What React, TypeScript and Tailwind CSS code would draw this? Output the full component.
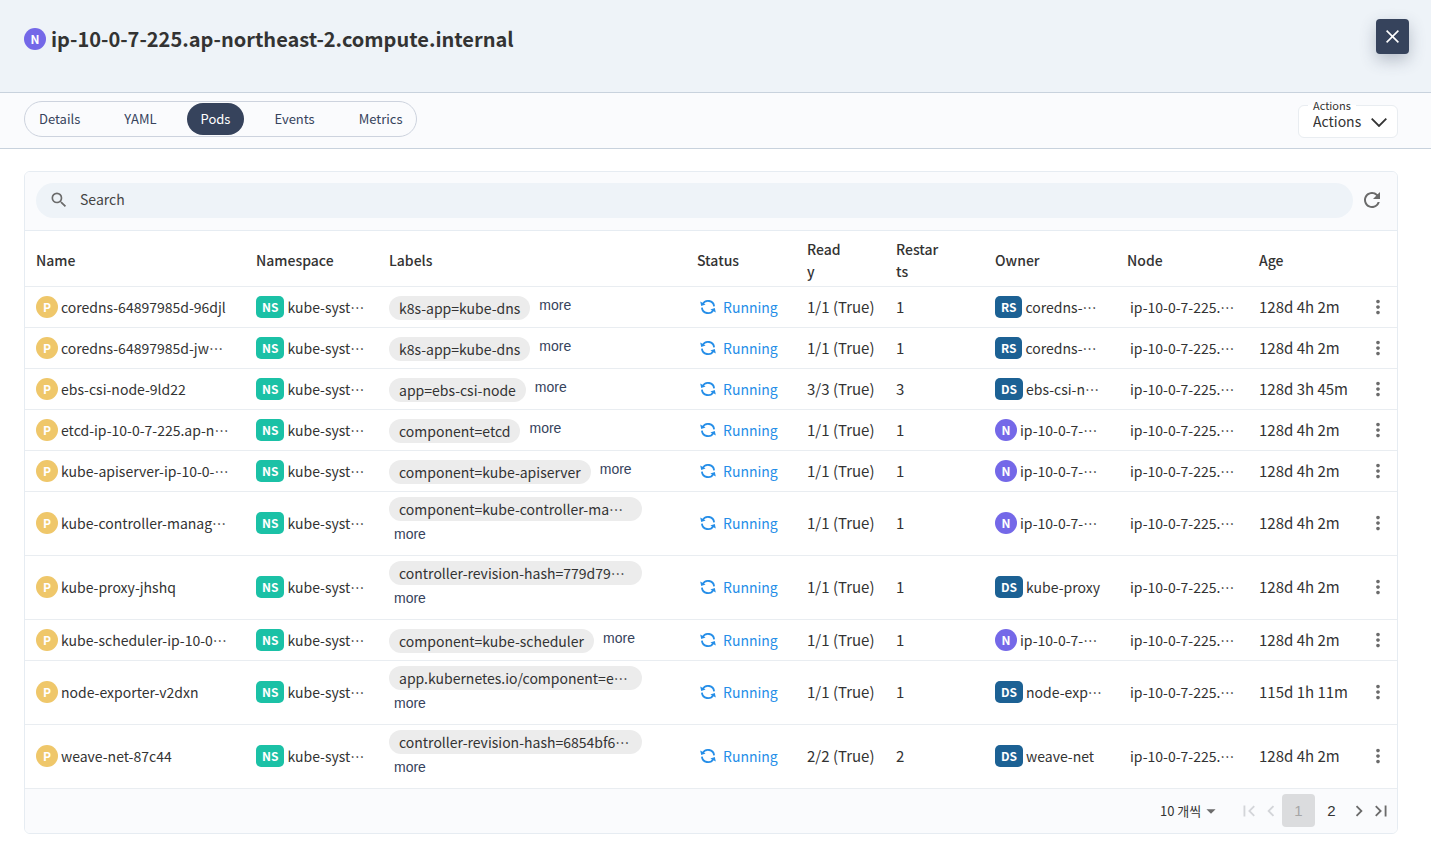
import { useState } from 'react'
import {
  MdArrowDropDown,
  MdChevronLeft,
  MdChevronRight,
  MdFirstPage,
  MdLastPage,
  MdMoreVert,
  MdRefresh,
  MdSearch,
} from 'react-icons/md'

type Kind = 'P' | 'NS' | 'RS' | 'DS' | 'N'

interface Pod {
  name: string
  label: string
  ready: string
  restarts: number
  ownerKind: Kind
  owner: string
  age: string
}

const NODE_NAME = 'ip-10-0-7-225.ap-northeast-2.compute.internal'

const tabs = ['Details', 'YAML', 'Pods', 'Events', 'Metrics']

const pods: Pod[] = [
  { name: 'coredns-64897985d-96djl', label: 'k8s-app=kube-dns', ready: '1/1 (True)', restarts: 1, ownerKind: 'RS', owner: 'coredns-…', age: '128d 4h 2m' },
  { name: 'coredns-64897985d-jw…', label: 'k8s-app=kube-dns', ready: '1/1 (True)', restarts: 1, ownerKind: 'RS', owner: 'coredns-…', age: '128d 4h 2m' },
  { name: 'ebs-csi-node-9ld22', label: 'app=ebs-csi-node', ready: '3/3 (True)', restarts: 3, ownerKind: 'DS', owner: 'ebs-csi-n…', age: '128d 3h 45m' },
  { name: 'etcd-ip-10-0-7-225.ap-n…', label: 'component=etcd', ready: '1/1 (True)', restarts: 1, ownerKind: 'N', owner: 'ip-10-0-7-…', age: '128d 4h 2m' },
  { name: 'kube-apiserver-ip-10-0-…', label: 'component=kube-apiserver', ready: '1/1 (True)', restarts: 1, ownerKind: 'N', owner: 'ip-10-0-7-…', age: '128d 4h 2m' },
  { name: 'kube-controller-manag…', label: 'component=kube-controller-ma…', ready: '1/1 (True)', restarts: 1, ownerKind: 'N', owner: 'ip-10-0-7-…', age: '128d 4h 2m' },
  { name: 'kube-proxy-jhshq', label: 'controller-revision-hash=779d79…', ready: '1/1 (True)', restarts: 1, ownerKind: 'DS', owner: 'kube-proxy', age: '128d 4h 2m' },
  { name: 'kube-scheduler-ip-10-0…', label: 'component=kube-scheduler', ready: '1/1 (True)', restarts: 1, ownerKind: 'N', owner: 'ip-10-0-7-…', age: '128d 4h 2m' },
  { name: 'node-exporter-v2dxn', label: 'app.kubernetes.io/component=e…', ready: '1/1 (True)', restarts: 1, ownerKind: 'DS', owner: 'node-exp…', age: '115d 1h 11m' },
  { name: 'weave-net-87c44', label: 'controller-revision-hash=6854bf6…', ready: '2/2 (True)', restarts: 2, ownerKind: 'DS', owner: 'weave-net', age: '128d 4h 2m' },
]

const columns = [
  { title: 'Name', width: 'w-[220px]' },
  { title: 'Namespace', width: 'w-[133px]' },
  { title: 'Labels', width: 'w-[308px]' },
  { title: 'Status', width: 'w-[110px]' },
  { title: 'Ready', width: 'w-[89px]' },
  { title: 'Restarts', width: 'w-[99px]' },
  { title: 'Owner', width: 'w-[132px]' },
  { title: 'Node', width: 'w-[132px]' },
  { title: 'Age', width: 'w-[108px]' },
]

const badgeStyles: Record<Kind, string> = {
  P: 'w-[22px] rounded-full bg-[#efc76a]',
  N: 'w-[22px] rounded-full bg-[#7468e8]',
  NS: 'px-[6px] rounded-[5px] bg-[#1bc1a6]',
  RS: 'px-[6px] rounded-[5px] bg-[#1c6194]',
  DS: 'px-[6px] rounded-[5px] bg-[#1c6194]',
}

function Clipped({ text }: { text: string }) {
  if (!text.endsWith('…')) return <>{text}</>

  return (
    <>
      {text.slice(0, -1)}
      <span className="inline-block">…</span>
    </>
  )
}

function Badge({ kind }: { kind: Kind }) {
  return (
    <span
      className={`inline-flex h-[22px] shrink-0 items-center justify-center text-xs font-bold leading-none text-white ${badgeStyles[kind]}`}
    >
      {kind}
    </span>
  )
}

function Resource({ kind, name }: { kind: Kind; name: string }) {
  return (
    <div className="flex items-center gap-[3px]">
      <Badge kind={kind} />
      <span className="whitespace-nowrap">
        <Clipped text={name} />
      </span>
    </div>
  )
}

function SyncIcon() {
  return (
    <svg width="16" height="16" viewBox="0 0 16 16" fill="none" stroke="currentColor" strokeWidth="1.8">
      <path d="M2.6 5.2A6.1 6.1 0 0 1 14.1 7.4" />
      <path d="M13.4 10.8A6.1 6.1 0 0 1 1.9 8.6" />
      <path d="M0.2 2.4L1.2 7L5.6 5.6Z" fill="currentColor" stroke="none" />
      <path d="M15.8 13.6L14.8 9L10.4 10.4Z" fill="currentColor" stroke="none" />
    </svg>
  )
}

// Long labels take the full line and push "more" below them
function LabelCell({ label }: { label: string }) {
  const long = label.length > 28

  return (
    <div className={long ? 'flex flex-col items-start gap-[2px] pb-1' : 'flex items-start gap-[9px]'}>
      <span
        className={`h-6 whitespace-nowrap rounded-full bg-[#ececec] px-[10px] leading-6 ${long ? 'w-[253px]' : 'mt-[2px]'}`}
      >
        <Clipped text={label} />
      </span>
      <button
        type="button"
        className={`font-['Liberation_Sans',sans-serif] leading-[22px] text-[#36435c] ${long ? 'ml-[5px]' : ''}`}
      >
        more
      </button>
    </div>
  )
}

function PodRow({ pod }: { pod: Pod }) {
  const long = pod.label.length > 28

  return (
    <tr className={`border-t border-[#e9edf1] ${long ? 'h-[64px]' : 'h-[41px]'}`}>
      <td className="pl-[11px] pr-[8px]">
        <Resource kind="P" name={pod.name} />
      </td>
      <td className="pl-[11px] pr-[8px]">
        <Resource kind="NS" name="kube-syst…" />
      </td>
      <td className="pl-[11px]">
        <LabelCell label={pod.label} />
      </td>
      <td className="pl-[14px]">
        <div className="flex items-center gap-[7px] text-[#258ee8]">
          <SyncIcon />
          <span>Running</span>
        </div>
      </td>
      <td className="whitespace-nowrap pl-[11px] text-[15px]">{pod.ready}</td>
      <td className="pl-[11px] text-[15px]">{pod.restarts}</td>
      <td className="pl-[11px] pr-[8px]">
        <Resource kind={pod.ownerKind} name={pod.owner} />
      </td>
      <td className="whitespace-nowrap pl-[14px] pr-[8px]">
        <Clipped text="ip-10-0-7-225.…" />
      </td>
      <td className="whitespace-nowrap pl-[11px] text-[15px]">{pod.age}</td>
      <td>
        <button type="button" aria-label={`Open menu for ${pod.name}`} className="flex w-full justify-center pl-[2px] text-[#6b6b6b]">
          <MdMoreVert size={22} />
        </button>
      </td>
    </tr>
  )
}

function Pagination() {
  return (
    <div className="flex h-[45px] items-center justify-end border-t border-[#e9edf1] bg-[#fafbfd] pb-px pr-[5px]">
      <div className="relative mr-[18px] flex items-center">
        <select
          aria-label="Rows per page"
          className="h-8 w-[60px] appearance-none bg-transparent text-[13px] outline-none"
        >
          <option>10 개씩</option>
          <option>20 개씩</option>
          <option>50 개씩</option>
        </select>
        <MdArrowDropDown size={22} className="pointer-events-none absolute -right-[2px] text-[#6b6b6b]" />
      </div>
      <button type="button" aria-label="First page" className="text-[#d3d5d9]" disabled>
        <MdFirstPage size={22} />
      </button>
      <button type="button" aria-label="Previous page" className="text-[#d3d5d9]" disabled>
        <MdChevronLeft size={22} />
      </button>
      <button
        type="button"
        className="size-[33px] rounded bg-[#dbdcde] font-['Liberation_Sans',sans-serif] text-[15px] text-[#a6a6a6]"
        disabled
      >
        1
      </button>
      <button type="button" className="size-[33px] font-['Liberation_Sans',sans-serif] text-[15px]">
        2
      </button>
      <button type="button" aria-label="Next page" className="text-[#6b6b6b]">
        <MdChevronRight size={22} />
      </button>
      <button type="button" aria-label="Last page" className="text-[#6b6b6b]">
        <MdLastPage size={22} />
      </button>
    </div>
  )
}

export default function App() {
  const [activeTab, setActiveTab] = useState('Pods')

  return (
    <div className="min-h-screen bg-white font-['Noto_Sans_CJK_KR',sans-serif] text-sm leading-[22px] text-[#333]">
      {/* Header */}
      <header className="flex h-[93px] items-start justify-between border-b border-[#c8d2dd] bg-[#eef3f8] pl-6 pr-[22px]">
        <div className="mt-6 flex items-center gap-[5px]">
          <Badge kind="N" />
          <h1 className="text-xl font-bold leading-[30px]">{NODE_NAME}</h1>
        </div>
        <button
          type="button"
          aria-label="Close"
          className="mt-[19px] flex h-[35px] w-[33px] items-center justify-center rounded bg-[#36435c] text-white shadow-[0_6px_16px_rgba(54,67,92,0.3)]"
        >
          <svg width="13" height="13" viewBox="0 0 13 13" fill="none" stroke="currentColor" strokeWidth="1.6">
            <path d="M0.6 0.6L12.4 12.4M12.4 0.6L0.6 12.4" />
          </svg>
        </button>
      </header>

      {/* Tabs */}
      <div className="flex h-[56px] items-center justify-between border-b border-[#c8d2dd] bg-[#fafbfd] pl-6 pr-[33px]">
        <nav className="mb-1 flex gap-4 rounded-full border border-[#cdd3de] py-px">
          {tabs.map((tab) => (
            <button
              key={tab}
              type="button"
              onClick={() => setActiveTab(tab)}
              className={`h-8 rounded-full px-[14px] text-[13px] ${
                tab === activeTab ? 'bg-[#36435c] text-white' : 'text-[#36435c]'
              }`}
            >
              {tab}
            </button>
          ))}
        </nav>
        <div className="relative mt-[2px] h-[33px] w-[100px] rounded-md border border-[#e9edf1] bg-white">
          <label
            htmlFor="actions"
            className="absolute -top-[9px] left-[9px] bg-linear-to-b from-[#fafbfd] from-50% to-white to-50% px-[5px] text-[11px] leading-4"
          >
            Actions
          </label>
          <select id="actions" className="h-full w-full appearance-none bg-transparent pb-[2px] pl-[14px] outline-none">
            <option>Actions</option>
            <option>Edit</option>
            <option>Delete</option>
          </select>
          <svg
            className="pointer-events-none absolute right-[10px] top-[12px]"
            width="16"
            height="9"
            viewBox="0 0 16 9"
            fill="none"
            stroke="currentColor"
            strokeWidth="1.8"
          >
            <path d="M0.7 0.7L8 8L15.3 0.7" />
          </svg>
        </div>
      </div>

      {/* Pod table */}
      <main className="pl-6 pr-[33px] pt-[22px]">
        <div className="overflow-hidden rounded-md border border-[#e6ecf2]">
          <div className="flex h-[59px] items-center gap-[7px] border-b border-[#e6ecf2] bg-[#fafbfd] pb-[2px] pl-[11px] pr-[13px]">
            <label className="flex h-[35px] grow items-center gap-[11px] rounded-full bg-[#eef3f8] px-[13px]">
              <MdSearch size={20} className="text-[#6b6b6b]" />
              <input
                type="text"
                aria-label="Search"
                placeholder="Search"
                className="grow bg-transparent pb-[2px] outline-none placeholder:text-[#444]"
              />
            </label>
            <button type="button" aria-label="Refresh" className="text-[#6b6b6b]">
              <MdRefresh size={24} />
            </button>
          </div>
          <table className="w-full table-fixed border-collapse text-left">
            <thead>
              <tr className="h-[55px]">
                {columns.map((column) => (
                  <th key={column.title} scope="col" className={`break-all pl-[11px] pr-[42px] pt-1 font-medium ${column.width}`}>
                    {column.title}
                  </th>
                ))}
                <th className="w-[41px]" aria-label="Menu" />
              </tr>
            </thead>
            <tbody>
              {pods.map((pod) => (
                <PodRow key={pod.name} pod={pod} />
              ))}
            </tbody>
          </table>
          <Pagination />
        </div>
      </main>
    </div>
  )
}
